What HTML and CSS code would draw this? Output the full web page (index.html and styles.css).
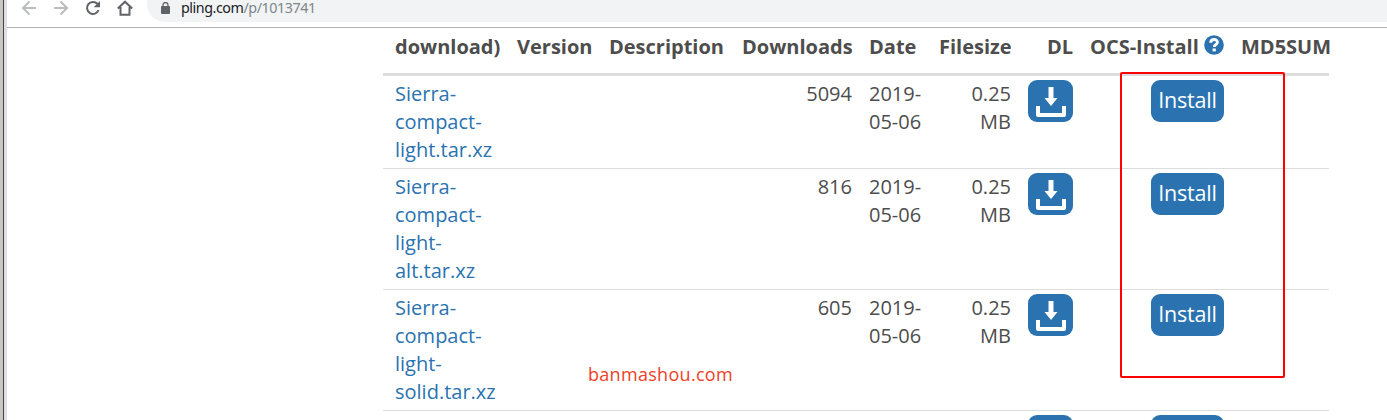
FILE: index.html
```html
<!DOCTYPE html>
<html lang="en">
<head>
<meta charset="utf-8">
<title>pling.com/p/1013741</title>
<link rel="stylesheet" href="styles.css">
</head>
<body>
<svg class="defs" aria-hidden="true">
  <symbol id="download" viewBox="0 0 45 42">
    <path d="M20.500 7h5v11h4L23 26l-6.500-8h4z" fill="#fff"/>
    <path d="M10 26v9h26v-9" fill="none" stroke="#fff" stroke-width="4" stroke-linejoin="round"/>
  </symbol>
</svg>
<div class="screen">
  <div class="edge"></div>
  <div class="window">
    <header class="toolbar">
      <nav class="nav">
        <svg class="off" viewBox="0 0 16 16"><path d="M15 8H2M8.500 1.500L2 8l6.500 6.500"/></svg>
        <svg class="off" viewBox="0 0 16 16"><path d="M1 8h13M7.500 1.500L14 8l-6.500 6.500"/></svg>
        <svg viewBox="0 0 16 16"><path d="M13.600 10.200A6 6 0 1 1 12.400 3.800L14 5.400"/><path class="fill" d="M15 1v6.300H8.700z"/></svg>
        <svg viewBox="0 0 16 16"><path d="M.8 8.500L8 1.700l7.200 6.800M3.500 7v7.800h9V7"/></svg>
      </nav>
      <div class="address">
        <svg class="lock" viewBox="0 0 9 12"><rect x="0" y="4" width="9" height="8" rx="1" fill="#5f6368"/><path d="M2 5V3a2.500 2.500 0 0 1 5 0v2" fill="none" stroke="#5f6368" stroke-width="1.300"/></svg>
        <span class="url"><b>pling.com</b>/p/1013741</span>
      </div>
    </header>
    <main class="page">
      <div class="files">
        <div class="row head">
          <span>download)</span><span>Version</span><span>Description</span><span class="r">Downloads</span><span>Date</span><span class="r">Filesize</span><span class="r">DL</span>
          <span class="ocs">OCS-Install<svg class="help" viewBox="0 0 20 20"><circle cx="10" cy="10" r="9.800" fill="#2a73b0"/><path d="M6.700 7.800C6.700 3.500 13.400 3.500 13.400 7.300c0 2.300-3.200 2.200-3.200 4.700" fill="none" stroke="#fff" stroke-width="2.900"/><path d="M8.600 13.500h3.200v2.900H8.600z" fill="#fff"/></svg></span>
          <span>MD5SUM</span>
        </div>
        <div class="row">
          <a>Sierra-<br>compact-<br>light.tar.xz</a><span></span><span></span><span class="r">5094</span><span>2019-<br>05-06</span><span class="r">0.25<br>MB</span>
          <svg class="dl"><use href="#download"/></svg><span class="install">Install</span>
        </div>
        <div class="row">
          <a>Sierra-<br>compact-<br>light-<br>alt.tar.xz</a><span></span><span></span><span class="r">816</span><span>2019-<br>05-06</span><span class="r">0.25<br>MB</span>
          <svg class="dl"><use href="#download"/></svg><span class="install">Install</span>
        </div>
        <div class="row">
          <a>Sierra-<br>compact-<br>light-<br>solid.tar.xz</a><span></span><span></span><span class="r">605</span><span>2019-<br>05-06</span><span class="r">0.25<br>MB</span>
          <svg class="dl"><use href="#download"/></svg><span class="install">Install</span>
        </div>
        <div class="row">
          <span></span><span></span><span></span><span></span><span></span><span></span>
          <svg class="dl"><use href="#download"/></svg><span class="install"></span>
        </div>
      </div>
    </main>
  </div>
  <div class="highlight"></div>
  <div class="watermark">banmashou.com</div>
</div>
</body>
</html>
```
FILE: styles.css
```css
* { box-sizing: border-box; }
body { margin: 0; background: #fff; }
.defs { display: none; }
.screen { position: relative; display: flex; width: 1387px; height: 420px; overflow: hidden; font-family: "Open Sans", sans-serif; }
.edge { flex: none; width: 7px; background: linear-gradient(to right, #cbc6c3 3px, #454545 3px, #454545 4px, #dce0e5 4px); }
.window { flex: 1; min-width: 0; }

.toolbar { display: flex; height: 28px; border-bottom: 1px solid #b0b2b4; }
.nav { display: flex; gap: 16px; width: 140px; padding-left: 14px; }
.nav svg { flex: none; width: 16px; height: 16px; fill: none; stroke: #5f6368; stroke-width: 2; }
.nav .off { stroke: #babcbe; }
.nav .fill { fill: #5f6368; stroke: none; }
.address { display: flex; flex: 1; height: 22px; padding-left: 14px; background: #f1f3f4; border-radius: 0 0 0 18px; }
.lock { width: 9px; height: 12px; margin-top: 2px; }
.url { margin-left: 11px; font: 14.3px/16px "Noto Sans", sans-serif; letter-spacing: -0.45px; color: #80868b; white-space: nowrap; }
.url b { font-weight: 400; color: #202124; }

.page { padding-left: 376px; }
.files { width: 947px; }
.row { display: grid; grid-template-columns: 105px 75px 116px 110px 53px 72px 45px 134px 88px; column-gap: 17px; align-items: start; width: 946px; padding: 4px 0 4px 12px; border-bottom: 1px solid #ddd; font-size: 20px; line-height: 28px; color: #4d4d4d; white-space: nowrap; }
.row.head { height: 48px; padding-top: 5px; border-bottom: 3px solid #ddd; font-weight: 700; }
.row a { color: #2a73b0; }
.r { text-align: right; }
.ocs { display: flex; justify-content: space-between; }
.help { width: 20px; height: 20px; margin-top: 2px; }
.dl { display: block; width: 45px; height: 42px; border-radius: 9px; background: #2a73b0; }
.install { justify-self: end; width: 73px; height: 42px; border-radius: 9px; background: #2a73b0; color: #fff; font-size: 21.5px; line-height: 39px; letter-spacing: -0.2px; text-align: center; }

.highlight { position: absolute; left: 1120px; top: 72px; width: 165px; height: 306px; border: 2px solid #f00; border-radius: 2px; }
.watermark { position: absolute; left: 588px; top: 361px; font-size: 18px; line-height: 26px; letter-spacing: 0.3px; color: #ee3f29; }
```
